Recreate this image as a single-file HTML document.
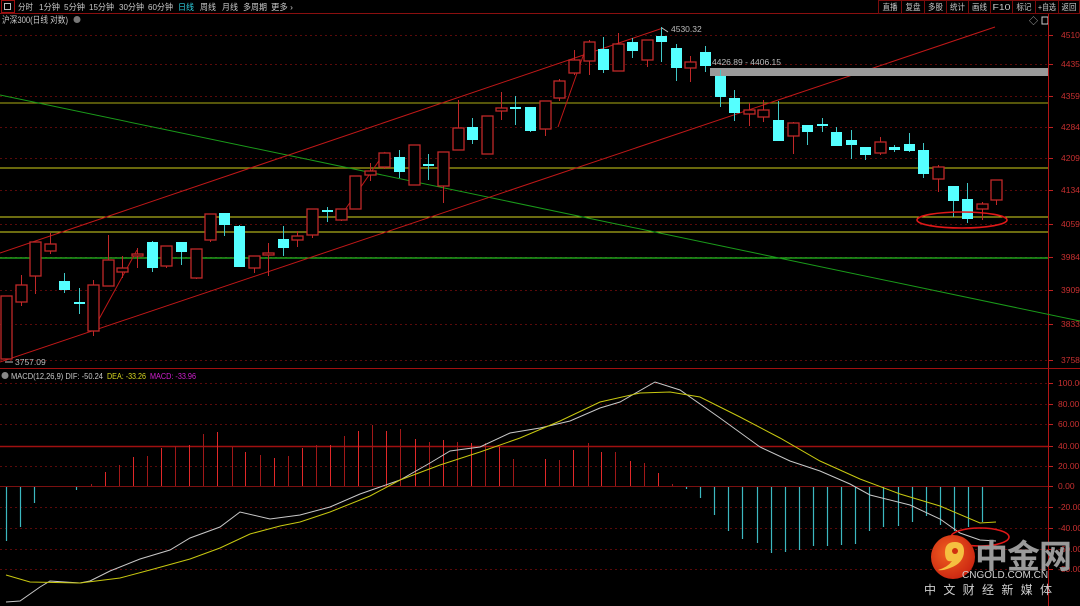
<!DOCTYPE html>
<html><head><meta charset="utf-8"><style>
html,body{margin:0;padding:0;background:#000;width:1080px;height:606px;overflow:hidden;font-family:"Liberation Sans","Noto Sans CJK SC",sans-serif}
#c{position:absolute;left:0;top:0}
</style></head><body>
<svg id="c" width="1080" height="606" xmlns="http://www.w3.org/2000/svg" font-family="Liberation Sans, Noto Sans CJK SC, sans-serif">
<rect width="1080" height="606" fill="#000"/>
<line x1="0" y1="13.5" x2="1080" y2="13.5" stroke="#8a0f0f"/>
<rect x="1.5" y="0.5" width="13" height="12" fill="none" stroke="#a01010"/>
<rect x="4.5" y="3.5" width="6" height="6" fill="none" stroke="#bbb"/>
<g font-size="8.5" fill="#c8c8c8" lengthAdjust="spacingAndGlyphs">
<text x="18" y="10" textLength="15" lengthAdjust="spacingAndGlyphs">分时</text>
<text x="39" y="10" textLength="21" lengthAdjust="spacingAndGlyphs">1分钟</text>
<text x="64" y="10" textLength="21" lengthAdjust="spacingAndGlyphs">5分钟</text>
<text x="89" y="10" textLength="25" lengthAdjust="spacingAndGlyphs">15分钟</text>
<text x="119" y="10" textLength="25" lengthAdjust="spacingAndGlyphs">30分钟</text>
<text x="148" y="10" textLength="25" lengthAdjust="spacingAndGlyphs">60分钟</text>
<text x="178" y="10" fill="#2fd0e0" textLength="16" lengthAdjust="spacingAndGlyphs">日线</text>
<text x="200" y="10" textLength="16" lengthAdjust="spacingAndGlyphs">周线</text>
<text x="222" y="10" textLength="16" lengthAdjust="spacingAndGlyphs">月线</text>
<text x="243" y="10" textLength="24" lengthAdjust="spacingAndGlyphs">多周期</text>
<text x="271" y="10" textLength="22" lengthAdjust="spacingAndGlyphs">更多 ›</text>
</g>
<g font-size="8.5" fill="#c8c8c8" id="rb"></g>
<text x="2" y="23" font-size="9" fill="#c8c8c8" textLength="66" lengthAdjust="spacingAndGlyphs">沪深300(日线 对数)</text>
<circle cx="77" cy="19.5" r="3.5" fill="#777"/>
<text x="1029" y="24" font-size="9" fill="#bbb">◇</text>
<rect x="1042" y="17" width="6" height="7" fill="none" stroke="#ccc"/>
<g id="g"></g>
</svg>
<script>
var s='';
function L(x1,y1,x2,y2,c,w,d){s+='<line x1="'+x1+'" y1="'+y1+'" x2="'+x2+'" y2="'+y2+'" stroke="'+c+'" stroke-width="'+(w||1)+'"'+(d?' stroke-dasharray="'+d+'"':'')+'/>';}
function T(x,y,t,c,fs,a){s+='<text x="'+x+'" y="'+y+'" fill="'+c+'" font-size="'+(fs||9)+'"'+(a?' '+a:'')+'>'+t+'</text>';}
var rb=['直播','复盘','多股','统计','画线','F10','标记','+自选','返回'],bx=[879,902,925,947,969,991,1013,1036,1059];
var r='';
for(var i=0;i<rb.length;i++){var w=((bx[i+1]||1080)-bx[i]);r+='<rect x="'+(bx[i]-0.5)+'" y="0.5" width="'+w+'" height="13" fill="none" stroke="#7a0c0c"/><text x="'+(bx[i]+w/2-0.5)+'" y="10" text-anchor="middle" textLength="'+(rb[i].length>2?18:15)+'" lengthAdjust="spacingAndGlyphs">'+rb[i]+'</text>';}
document.getElementById('rb').innerHTML=r;
var gy=[35,64,96,127,158,190,224,257,290,324,360],gl=['4510','4435','4359','4284','4209','4134','4059','3984','3909','3833','3758'];
for(var i=0;i<gy.length;i++){L(0,gy[i]+.5,1048,gy[i]+.5,'#5a0a0a',1,'2,3');L(1049,gy[i]+.5,1053,gy[i]+.5,'#c02020');T(1061,gy[i]+3,gl[i],'#c83030',8.5);}
var my=[383,404,424,466,486,507,528,549,569],ml=['100.00','80.00','60.00','20.00','0.00','-20.00','-40.00','-60.00','-80.00'];
for(var i=0;i<my.length;i++){L(0,my[i]+.5,1048,my[i]+.5,'#5a0a0a',1,'2,3');L(1049,my[i]+.5,1053,my[i]+.5,'#c02020');T(1058,my[i]+3,ml[i],'#c83030',8.5);}
L(1049,446.5,1053,446.5,'#c02020');T(1058,449,'40.00','#c83030',8.5);
L(0,486.5,1048,486.5,'#7a1010');
L(0,446.5,1048,446.5,'#a01010',1.5);
L(1048.5,14,1048.5,606,'#b01515');
L(0,368.5,1080,368.5,'#a01010',1);
L(0,103,1048,103,'#8a8a10',1.3);L(0,168,1048,168,'#8a8a10',1.6);L(0,217,1048,217,'#d8d820',1);L(0,232,1048,232,'#d8d820',1);L(0,258,1048,258,'#20c020',1.2);
L(0,95,1080,321,'#1a9a1a',1);
L(0,253,663,28,'#c01818',1);
L(0,362,995,27,'#c01818',1);
L(93,330,137,250,'#c01818',1);L(340,217,385,152,'#c01818',1);L(558,127,588,42,'#c01818',1);
s+='<rect x="710" y="68" width="338" height="8" fill="#9a9a9a"/>';
T(712,65,'4426.89 - 4406.15','#bbb',8.5);
T(671,32,'4530.32','#bbb',8.5);L(662,28,668,32,'#bbb');
T(15,365,'3757.09','#bbb',8.5);L(5,362,13,362,'#bbb');
var D=`R 6 296 359 296 359
R 21 285 302 275 306
R 35 242 276 242 294
R 50 244 251 233 254
C 64 281 290 273 293
C 79 302 304 288 314
R 93 285 331 280 336
R 108 260 286 235 286
R 122 268 272 256 278
R 137 254 256 248 268
C 152 242 268 241 272
R 166 246 266 246 268
C 181 242 252 242 265
R 196 249 278 249 279
R 210 214 240 214 242
C 224 213 225 213 236
C 239 226 267 225 267
R 254 256 268 256 273
R 268 253 255 243 276
C 283 239 248 226 256
R 297 236 240 231 247
R 312 209 235 209 238
C 327 210 212 207 222
R 341 209 220 209 221
R 355 176 209 176 209
R 370 171 175 163 181
R 384 153 167 153 169
C 399 157 172 150 178
R 414 145 185 145 185
C 428 164 166 154 180
R 443 152 186 152 203
R 458 128 150 100 150
C 472 127 140 118 144
R 487 116 154 116 154
R 501 108 111 92 120
C 515 107 109 96 125
C 530 107 131 107 132
R 545 101 129 101 136
R 559 81 98 79 101
R 574 60 73 50 75
R 589 42 61 40 75
C 603 49 70 37 73
R 618 44 71 33 71
C 632 42 51 38 58
R 647 40 60 40 67
C 661 36 42 27 62
C 676 48 68 44 81
R 690 62 68 56 82
C 705 52 66 46 72
C 720 76 97 70 107
C 734 98 113 90 121
R 749 110 114 103 126
R 763 110 117 100 122
C 778 120 141 101 141
R 793 123 136 122 154
C 807 125 132 125 145
C 822 124 126 118 132
C 836 132 146 127 146
C 851 140 145 130 159
C 865 147 155 147 160
R 880 142 153 137 155
C 894 147 150 145 152
C 909 144 151 133 152
C 923 150 174 143 178
R 938 167 179 165 192
C 953 186 201 186 217
C 967 199 219 183 223
R 982 204 209 202 220
R 996 180 200 180 205`.split('\n');
D.forEach(function(l){var p=l.trim().split(' '),c=p[0],x=+p[1],t=+p[2],b=+p[3],wt=+p[4],wb=+p[5];
 if(c=='R'){L(x+.5,wt,x+.5,t,'#c02828');L(x+.5,b,x+.5,wb,'#c02828');s+='<rect x="'+(x-5)+'" y="'+t+'" width="11" height="'+Math.max(b-t,1)+'" fill="#000" stroke="#c02828" stroke-width="1.3"/>';}
 else{L(x+.5,wt,x+.5,wb,'#40c8c8');s+='<rect x="'+(x-5)+'" y="'+t+'" width="11" height="'+Math.max(b-t,2)+'" fill="#55ffff"/>';}
});
s+='<ellipse cx="962" cy="220" rx="45" ry="8" fill="none" stroke="#e01818" stroke-width="1.6"/>';
s+='<circle cx="5" cy="375.5" r="3.5" fill="#888"/>';
T(11,379,'MACD(12,26,9) DIF: -50.24','#c8c8c8',8.5,'textLength="92" lengthAdjust="spacingAndGlyphs"');
T(107,379,'DEA: -33.26','#d8d820',8.5,'textLength="39" lengthAdjust="spacingAndGlyphs"');
T(150,379,'MACD: -33.96','#d020d0',8.5,'textLength="46" lengthAdjust="spacingAndGlyphs"');
var red=[[91,484],[105,472],[119,465],[133,457],[147,456],[161,448],[175,446],[189,445],[203,434],[217,432],[232,447],[245,452],[260,455],[274,458],[288,456],[302,448],[316,445],[330,445],[344,436],[358,431],[372,425],[386,431],[400,429],[415,439],[429,442],[443,440],[457,442],[471,443],[485,443],[499,447],[513,459],[545,459],[559,460],[573,450],[588,443],[601,452],[615,452],[630,461],[644,463],[658,473],[672,484]];
red.forEach(function(a,i){L(a[0]+.5,486,a[0]+.5,a[1],i%2?'#e02828':'#a01818');});
var cy=[[6,541],[20,527],[34,503],[76,490]];
var cv=[489,498,515,531,539,543,553,552,550,546,546,545,544,531,527,526,522,516,525,531,527,522];
for(var i=0;i<cv.length;i++)cy.push([686+i*14.1,cv[i]]);
cy.forEach(function(a){L(Math.round(a[0])+.5,487,Math.round(a[0])+.5,a[1],'#3cb8c0',1.2);});
function P(pts,c){s+='<polyline fill="none" stroke="'+c+'" stroke-width="1" points="'+pts+'"/>';}
P('6,602 20,601 40,587 50,581 80,583 90,581 110,571 140,559 170,550 190,538 220,527 240,512 270,519 300,515 330,507 360,494 400,480 430,463 450,451 480,447 510,433 540,428 570,421 600,408 620,402 655,382 680,390 720,418 760,447 790,461 820,471 850,484 870,495 910,505 940,519 960,533 980,540 996,541','#c8c8c8');
P('6,575 30,582 80,583 120,578 150,570 190,559 220,548 250,534 280,526 300,522 330,512 370,496 400,480 440,465 480,452 520,438 560,421 600,402 640,393 670,392 700,397 740,417 780,438 820,461 860,479 900,494 940,506 980,523 996,522','#c8c810');
s+='<ellipse cx="980" cy="537" rx="29" ry="9" fill="none" stroke="#e01818" stroke-width="1.6"/>';
s+='<defs><radialGradient id="lg" cx="0.4" cy="0.4" r="0.7"><stop offset="0" stop-color="#f06020"/><stop offset="1" stop-color="#c82010"/></radialGradient></defs>';
s+='<circle cx="953" cy="557" r="22" fill="url(#lg)"/>';
s+='<path d="M945 552 q0-10 10-10 q9 0 9 9 q0 12-14 17 q-8 3-12 2 q10-3 14-9 q-7 2-7-9z" fill="#f5c040"/>';
s+='<circle cx="955" cy="551" r="3" fill="#d03010"/>';
T(975,568,'中金网','#9a9a9a',33,'font-weight="bold" letter-spacing="-1"');
T(962,578,'CNGOLD.COM.CN','#cfcfcf',10);
T(924,594,'中 文 财 经 新 媒 体','#cfcfcf',12,'letter-spacing="2"');
document.getElementById('g').innerHTML=s;
</script>
</body></html>
